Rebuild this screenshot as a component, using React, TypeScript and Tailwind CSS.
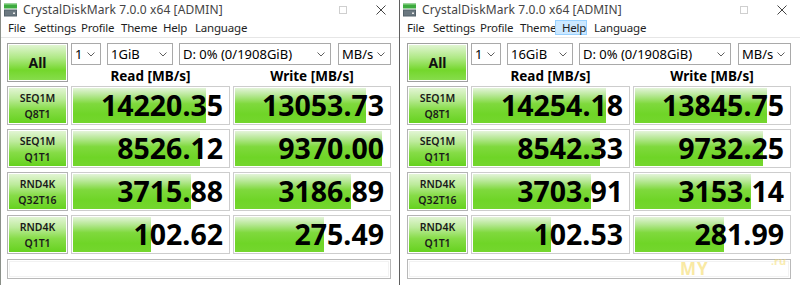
import React from 'react';

type Row = {
  l1: string;
  l2: string;
  read: string;
  readPct: number;
  write: string;
  writePct: number;
};

const leftRows: Row[] = [
  { l1: 'SEQ1M', l2: 'Q8T1', read: '14220.35', readPct: 85.5, write: '13053.73', writePct: 85 },
  { l1: 'SEQ1M', l2: 'Q1T1', read: '8526.12', readPct: 82, write: '9370.00', writePct: 95.5 },
  { l1: 'RND4K', l2: 'Q32T16', read: '3715.88', readPct: 76, write: '3186.89', writePct: 75 },
  { l1: 'RND4K', l2: 'Q1T1', read: '102.62', readPct: 50, write: '275.49', writePct: 58 },
];

const rightRows: Row[] = [
  { l1: 'SEQ1M', l2: 'Q8T1', read: '14254.18', readPct: 85.5, write: '13845.75', writePct: 85.5 },
  { l1: 'SEQ1M', l2: 'Q1T1', read: '8542.33', readPct: 82, write: '9732.25', writePct: 83 },
  { l1: 'RND4K', l2: 'Q32T16', read: '3703.91', readPct: 76, write: '3153.14', writePct: 75 },
  { l1: 'RND4K', l2: 'Q1T1', read: '102.53', readPct: 50, write: '281.99', writePct: 58 },
];

const menu = [
  { label: 'File', w: 'w-[26px]' },
  { label: 'Settings', w: 'w-[47px]' },
  { label: 'Profile', w: 'w-[40px]' },
  { label: 'Theme', w: 'w-[42px]' },
  { label: 'Help', w: 'w-[32px]' },
  { label: 'Language', w: 'w-[60px]' },
];

function CdmIcon() {
  return (
    <svg width="13" height="14" viewBox="0 0 13 14" className="shrink-0">
      <rect x="0" y="0.5" width="13" height="5" fill="#3daa3f" />
      <rect x="0" y="1" width="13" height="1" fill="#6cc46a" />
      <rect x="0" y="6.5" width="13" height="7" fill="#55626a" />
      <rect x="1" y="7.5" width="11" height="5" fill="#6b7880" />
      <rect x="9" y="9.5" width="2" height="1.5" fill="#e8e8e8" />
    </svg>
  );
}

function Chevron() {
  return (
    <svg width="8" height="5" viewBox="0 0 8 5" className="shrink-0">
      <polyline points="0.5,0.5 4,4 7.5,0.5" fill="none" stroke="#606060" strokeWidth="1" />
    </svg>
  );
}

function Combo({ value, w }: { value: string; w: string }) {
  return (
    <div className={`flex h-[22px] items-center justify-between border border-[#a9a9a9] bg-white pl-[3px] pr-[5px] ${w}`}>
      <span className="text-[13px] leading-none text-black">{value}</span>
      <Chevron />
    </div>
  );
}

function Label({ l1, l2 }: { l1: string; l2: string }) {
  return (
    <div className="h-[39px] w-[61px] shrink-0 border border-[#b4b4b4] bg-white p-px">
      <div className="flex h-full flex-col items-center justify-center bg-[linear-gradient(to_bottom,#e2f5d4_0%,#bdeb9c_30%,#86dc47_62%,#66d21f_100%)] text-[10.5px] font-semibold leading-[16px] text-[#1a1a1a]">
        <span>{l1}</span>
        <span>{l2}</span>
      </div>
    </div>
  );
}

function Value({ value, pct, w }: { value: string; pct: number; w: string }) {
  return (
    <div className={`h-[39px] shrink-0 border border-[#cdcdcd] bg-white p-px ${w}`}>
      <div className="relative h-full w-full bg-white">
        <div
          className="absolute inset-y-0 left-0 bg-[linear-gradient(to_bottom,#e4f4da_0%,#b4e791_22%,#7fd93d_45%,#6fd527_75%,#74d62e_100%)]"
          style={{ width: `${pct}%` }}
        />
        <span className="relative flex h-full items-center justify-end pr-[5px] text-[28.5px] font-bold leading-[35px] text-black">
          {value}
        </span>
      </div>
    </div>
  );
}

function Window({
  size,
  rows,
  helpActive,
  first,
}: {
  size: string;
  rows: Row[];
  helpActive?: boolean;
  first?: boolean;
}) {
  return (
    <div
      className={`relative flex h-[285px] w-[400px] shrink-0 flex-col bg-white ${
        first ? 'border-l border-r border-l-[#8a8f88] border-r-[#5f5f5f]' : ''
      }`}
    >
      {/* title bar */}
      <div className="flex h-[20px] items-center pl-[3px]">
        <CdmIcon />
        <span className="ml-[6px] text-[12px] tracking-[0.1px] text-[#444]">CrystalDiskMark 7.0.0 x64 [ADMIN]</span>
        <span className="ml-auto h-[8px] w-[8px] border border-[#cfcfcf]" />
        <svg width="10" height="10" viewBox="0 0 10 10" className="ml-[29px] mr-[13px]">
          <path d="M0.5 0.5 L9.5 9.5 M9.5 0.5 L0.5 9.5" stroke="#444" strokeWidth="1" />
        </svg>
      </div>

      {/* menu */}
      <div className="flex h-[18px] items-stretch border-b border-[#e6e6e6] pb-[2px] text-[11.5px] tracking-[-0.2px] text-[#1e1e1e]">
        {menu.map((m) => {
          const on = helpActive && m.label === 'Help';
          return (
            <span
              key={m.label}
              className={`flex items-center ${m.w} ${on ? 'border border-[#99d1ff] bg-[#cce8ff] pl-[6px]' : 'pl-[7px]'}`}
            >
              {m.label}
            </span>
          );
        })}
      </div>

      {/* content */}
      <div className={`flex flex-col pt-[5px] ${first ? 'pl-[6px]' : 'pl-[7px]'}`}>
        <div className="flex gap-[3px]">
          <div className="h-[39px] w-[61px] shrink-0 border border-[#a0a0a0] bg-white p-px">
            <div className="flex h-full items-center justify-center bg-[linear-gradient(to_bottom,#e0f5d1_0%,#ade882_38%,#74d72c_72%,#86dc4b_100%)] text-[14px] font-bold text-[#111]">
              All
            </div>
          </div>
          <div className="flex w-[320px] flex-col">
            <div className="flex h-[22px] gap-[6px]">
              <Combo value="1" w="w-[30px]" />
              <Combo value={size} w="w-[66px]" />
              <Combo value="D: 0% (0/1908GiB)" w="w-[152px]" />
              <Combo value="MB/s" w="ml-[1px] w-[53px]" />
            </div>
            <div className="flex h-[17px] items-end gap-[3px] text-[13.5px] font-bold leading-[12px] text-black">
              <span className="w-[159px] text-center">Read [MB/s]</span>
              <span className="w-[158px] text-center">Write [MB/s]</span>
            </div>
          </div>
        </div>

        {rows.map((r, i) => (
          <div key={i} className="mt-[4px] flex gap-[3px]">
            <Label l1={r.l1} l2={r.l2} />
            <Value value={r.read} pct={r.readPct} w="w-[159px]" />
            <Value value={r.write} pct={r.writePct} w="w-[158px]" />
          </div>
        ))}

        <div className="mt-[5px] h-[20px] w-[384px] border border-[#b9b9b9] bg-white p-px">
          <div className="h-full w-full border border-[#f2f2f2]" />
        </div>
      </div>

      {!first ? (
        <>
          <span className="absolute left-[280px] top-[262px] text-[17px] font-bold leading-[14px] tracking-[1px] text-[#f6dc68] opacity-60">
            MY
          </span>
          <span className="absolute left-[371px] top-[257px] text-[11px] font-bold leading-[8px] text-[#f6dc68] opacity-50">.ru</span>
        </>
      ) : null}
    </div>
  );
}

export default function App() {
  return (
    <div className="flex h-[285px] w-[800px] overflow-hidden bg-white font-['Noto_Sans','DejaVu_Sans',sans-serif]">
      <Window size="1GiB" rows={leftRows} first />
      <Window size="16GiB" rows={rightRows} helpActive />
    </div>
  );
}
